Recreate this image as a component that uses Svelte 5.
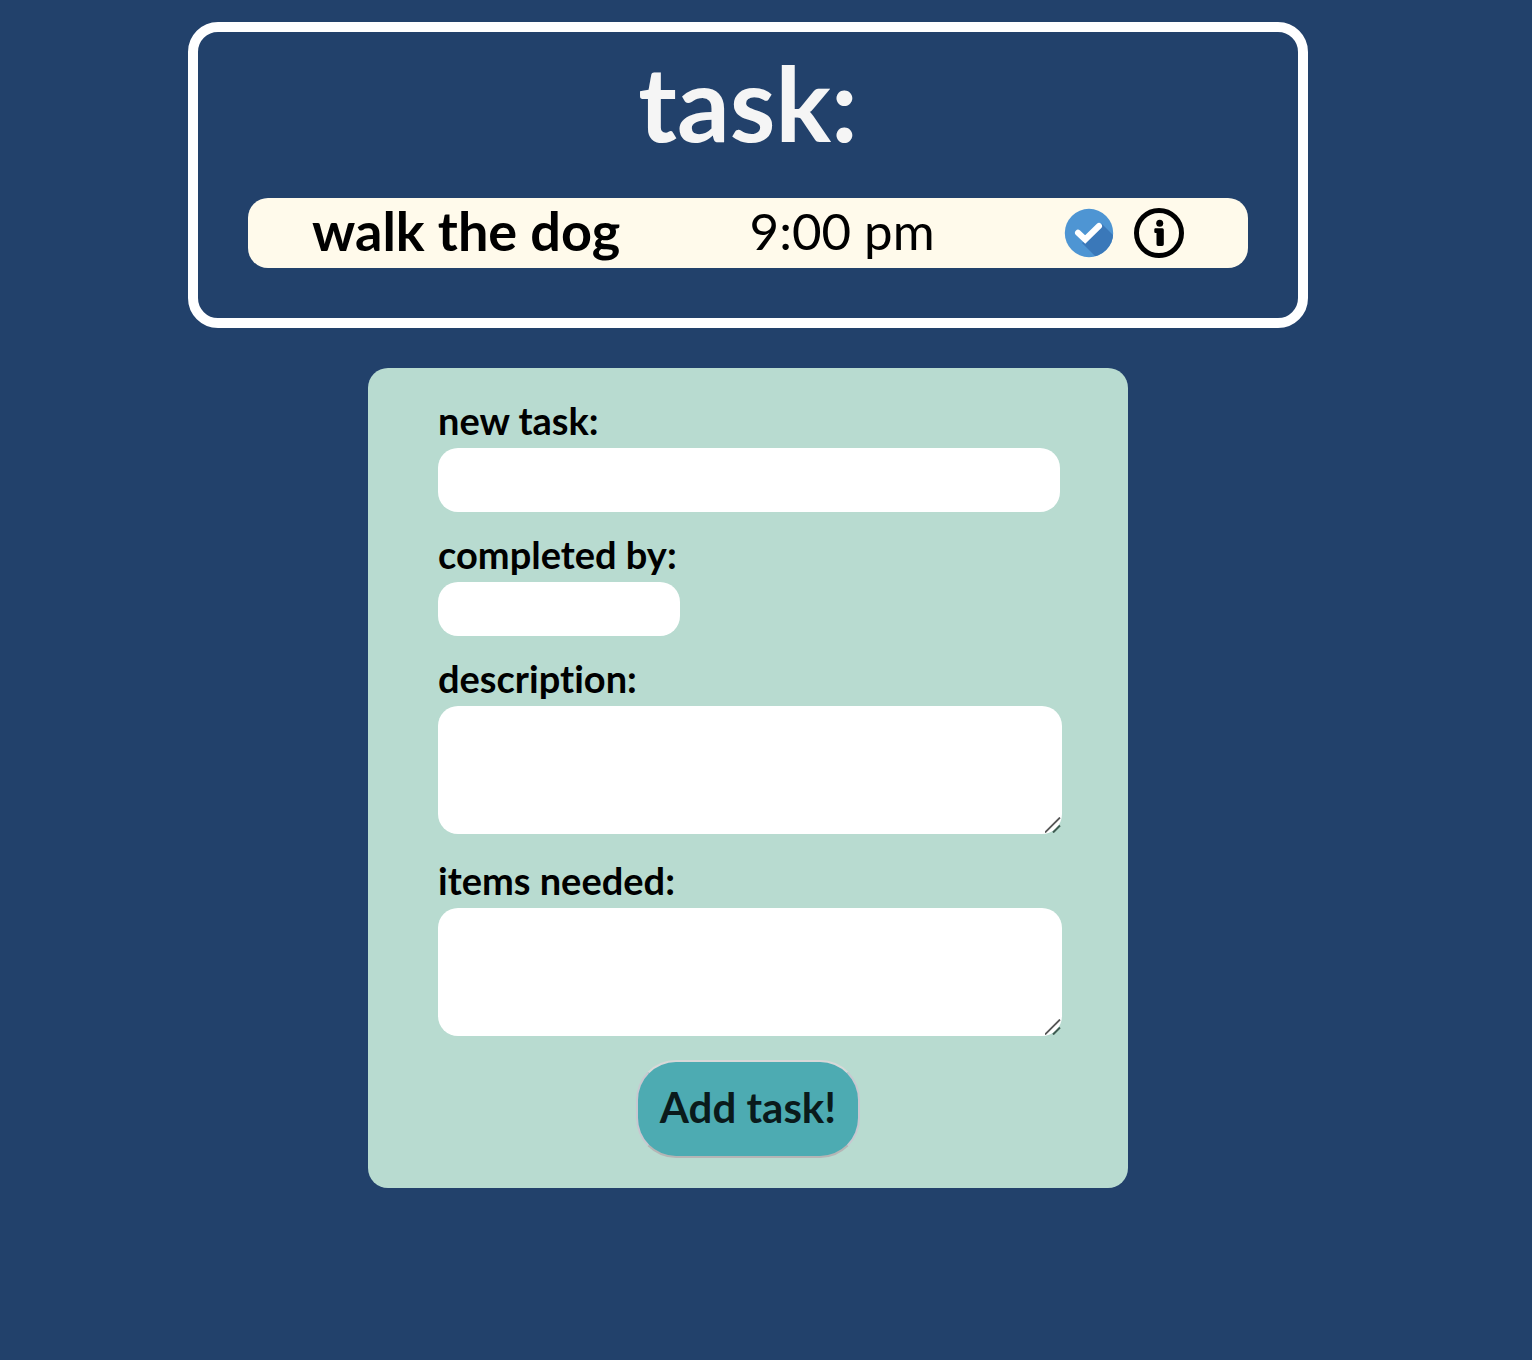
<script lang="ts">
  let title = $state('');
  let due = $state('');
  let description = $state('');
  let items = $state('');
</script>

{#snippet grip()}
  <svg class="grip" viewBox="0 0 16 16" aria-hidden="true">
    <path d="M0 15.500 15 .500" stroke="#555" stroke-width="1.800" />
    <path d="M8 15.500 15 8.500" stroke="#3f5c52" stroke-width="2" />
  </svg>
{/snippet}

<main>
  <section class="board">
    <h1>task:</h1>
    <div class="row">
      <strong class="name">walk the dog</strong>
      <span class="time">9:00 pm</span>
      <div class="actions">
        <button type="button" class="icon" aria-label="Complete">
          <svg viewBox="0 0 50 50" aria-hidden="true">
            <defs><clipPath id="disc"><circle cx="25" cy="25" r="24.200" /></clipPath></defs>
            <circle cx="25" cy="25" r="24.200" fill="#4e95d3" />
            <path d="M38 16 56 34V56H39L18 35Z" fill="#3a78b9" clip-path="url(#disc)" />
            <path d="M14 24.800 21.200 31.500 35 18" fill="none" stroke="#fff" stroke-width="6" stroke-linecap="round" stroke-linejoin="miter" />
          </svg>
        </button>
        <button type="button" class="icon" aria-label="Details">
          <svg viewBox="0 0 50 50" aria-hidden="true">
            <circle cx="25" cy="25" r="22.500" fill="none" stroke="#000" stroke-width="5" />
            <circle cx="25.700" cy="15.200" r="3.500" />
            <path d="M21.500 20.200H28.300Q29.800 20.200 29.800 21.700V36.300Q29.800 38 28.100 38H24.200Q22.500 38 22.500 36.300V25H21.500Q20.300 25 20.300 23.800V21.400Q20.300 20.200 21.500 20.200Z" />
          </svg>
        </button>
      </div>
    </div>
  </section>

  <form onsubmit={(e) => e.preventDefault()}>
    <label for="title">new task:</label>
    <input id="title" class="wide" type="text" bind:value={title} />

    <label for="due">completed by:</label>
    <input id="due" class="short" type="text" bind:value={due} />

    <label for="description">description:</label>
    <div class="area">
      <textarea id="description" bind:value={description}></textarea>
      {@render grip()}
    </div>

    <label class="spaced" for="items">items needed:</label>
    <div class="area">
      <textarea id="items" bind:value={items}></textarea>
      {@render grip()}
    </div>

    <button class="submit" type="submit">Add task!</button>
  </form>
</main>

<style>
  :global(body) {
    background: #22416b;
    margin: 0;
  }

  main {
    box-sizing: border-box;
    display: flex;
    flex-direction: column;
    align-items: center;
    gap: 40px;
    padding: 22px 36px 40px 0;
    font-family: Avenir, Lato, sans-serif;
    font-variant-ligatures: none;
    color: #000;
  }

  .board {
    box-sizing: border-box;
    width: 100%;
    max-width: 1120px;
    padding: 10px 50px 50px;
    border: 10px solid #fff;
    border-radius: 30px;
  }

  h1 {
    margin: 0 0 36px;
    font-size: 104px;
    line-height: 120px;
    font-weight: 700;
    text-align: center;
    color: #f5f5f5;
  }

  .row {
    display: flex;
    justify-content: space-between;
    align-items: center;
    min-height: 70px;
    padding: 0 64px;
    border-radius: 20px;
    background: #fffaeb;
    line-height: 66px;
  }

  .name,
  .time {
    padding-bottom: 4px;
  }

  .name {
    font-size: 54px;
    font-weight: 700;
  }

  .time {
    font-size: 51px;
  }

  .actions {
    display: flex;
    gap: 20px;
  }

  button {
    font-family: inherit;
    cursor: pointer;
  }

  .icon {
    width: 50px;
    height: 50px;
    padding: 0;
    border: 0;
    background: none;
  }

  .icon svg {
    display: block;
    width: 100%;
    height: 100%;
  }

  form {
    box-sizing: border-box;
    display: flex;
    flex-direction: column;
    align-items: flex-start;
    width: 100%;
    max-width: 760px;
    padding: 28px 66px 30px 70px;
    border-radius: 20px;
    background: #b8dbd0;
  }

  label {
    margin: 0 0 4px;
    font-size: 38px;
    line-height: 48px;
    font-weight: 700;
  }

  input + label {
    margin-top: 18px;
  }

  .spaced {
    margin-top: 22px;
  }

  input,
  textarea {
    box-sizing: border-box;
    padding: 8px 16px;
    border: 0;
    border-radius: 20px;
    background: #fff;
    font: 28px/40px Avenir, Lato, sans-serif;
  }

  .wide {
    width: 100%;
    max-width: 622px;
    height: 64px;
  }

  .short {
    width: 242px;
    height: 54px;
  }

  .area {
    position: relative;
    width: 100%;
  }

  textarea {
    display: block;
    width: 100%;
    height: 128px;
    resize: none;
  }

  .grip {
    position: absolute;
    right: 1px;
    bottom: 1px;
    width: 16px;
    height: 16px;
    pointer-events: none;
  }

  .submit {
    align-self: center;
    min-width: 224px;
    margin: 24px 4px 0 0;
    padding: 18px 20px 22px;
    border: 2px solid;
    border-color: #d8d8d8 #c8c8d0 #b5b5b5;
    border-radius: 40px;
    background: #4dabb2;
    color: #0a1a1b;
    font-size: 42px;
    line-height: 54px;
    font-weight: 700;
  }
</style>
